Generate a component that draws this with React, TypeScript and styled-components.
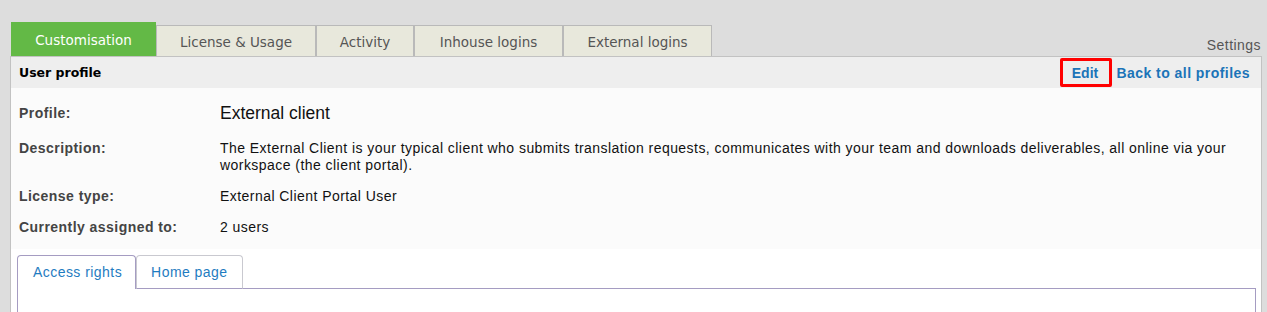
import styled, { createGlobalStyle } from 'styled-components';

const tabs = [
    { label: 'Customisation', width: 145 },
    { label: 'License & Usage', width: 160 },
    { label: 'Activity', width: 98 },
    { label: 'Inhouse logins', width: 149 },
    { label: 'External logins', width: 149 },
];

const rows = [
    { label: 'Profile:', value: 'External client', large: true },
    {
        label: 'Description:',
        value:
            'The External Client is your typical client who submits translation requests, communicates with your team and downloads deliverables, all online via your workspace (the client portal).',
    },
    { label: 'License type:', value: 'External Client Portal User' },
    { label: 'Currently assigned to:', value: '2 users' },
];

export default function App() {
    return (
        <>
            <GlobalStyle />
            <StyledPage>
                <StyledTabBar>
                    {tabs.map((t, i) => (
                        <StyledTab key={t.label} $active={i === 0} $width={t.width}>
                            {t.label}
                        </StyledTab>
                    ))}
                    <StyledSettings>Settings</StyledSettings>
                </StyledTabBar>
                <StyledPanel>
                    <StyledHeader>
                        <StyledTitle>User profile</StyledTitle>
                        <StyledActions>
                            <StyledEdit>Edit</StyledEdit>
                            <StyledLink>Back to all profiles</StyledLink>
                        </StyledActions>
                    </StyledHeader>
                    <StyledInfo>
                        {rows.map((r) => (
                            <StyledRow key={r.label} $large={r.large}>
                                <StyledLabel>{r.label}</StyledLabel>
                                <StyledValue $large={r.large}>{r.value}</StyledValue>
                            </StyledRow>
                        ))}
                    </StyledInfo>
                    <StyledSub>
                        <StyledSubTabs>
                            <StyledSubTab $active>Access rights</StyledSubTab>
                            <StyledSubTab>Home page</StyledSubTab>
                        </StyledSubTabs>
                        <StyledSubBox />
                    </StyledSub>
                </StyledPanel>
            </StyledPage>
        </>
    );
}

const GlobalStyle = createGlobalStyle`
    html, body {
        margin: 0;
        background: #dddddd;
        font-family: "Liberation Sans", Arial, sans-serif;
        letter-spacing: 0.45px;
        overflow: hidden;
    }
`;

const StyledPage = styled.div`
    padding: 22px 5px 0 10px;
    height: 312px;
    box-sizing: border-box;
    display: flex;
    flex-direction: column;
`;

const StyledTabBar = styled.div`
    display: flex;
    align-items: flex-end;
    height: 34px;
    padding-left: 1px;
`;

const StyledTab = styled.div<{ $active?: boolean; $width: number }>`
    box-sizing: border-box;
    width: ${(p) => p.$width}px;
    height: ${(p) => (p.$active ? '34px' : '31px')};
    padding-top: ${(p) => (p.$active ? '0' : '2px')};
    display: flex;
    align-items: center;
    justify-content: center;
    white-space: nowrap;
    font-family: "DejaVu Sans", Verdana, sans-serif;
    font-size: 13.5px;
    letter-spacing: 0;
    color: ${(p) => (p.$active ? '#ffffff' : '#555555')};
    background: ${(p) => (p.$active ? '#63b946' : '#e8e8dc')};
    border: 1px solid ${(p) => (p.$active ? '#63b946' : '#b9b9b9')};
    border-bottom: none;
`;

const StyledSettings = styled.span`
    margin-left: auto;
    margin-right: 1px;
    margin-bottom: 3px;
    font-size: 14px;
    color: #555555;
`;

const StyledPanel = styled.div`
    flex: 1;
    border: 1px solid #c2c2c2;
    border-bottom: none;
    background: #ffffff;
    display: flex;
    flex-direction: column;
`;

const StyledHeader = styled.div`
    height: 31px;
    background: #eeeeee;
    display: flex;
    align-items: center;
    padding: 0 11px 0 8px;
`;

const StyledTitle = styled.span`
    font-family: "DejaVu Sans", Verdana, sans-serif;
    font-weight: bold;
    font-size: 12.5px;
    letter-spacing: 0;
    color: #000000;
`;

const StyledActions = styled.div`
    margin-left: auto;
    display: flex;
    align-items: center;
    gap: 5px;
`;

const StyledEdit = styled.span`
    box-sizing: border-box;
    width: 52px;
    height: 29px;
    padding-right: 1px;
    display: flex;
    align-items: center;
    justify-content: center;
    border: 3px solid #ff0000;
    border-radius: 2px;
    color: #1b74b8;
    font-weight: bold;
    font-size: 14px;
    letter-spacing: 0;
`;

const StyledLink = styled.span`
    color: #1b74b8;
    font-weight: bold;
    font-size: 14px;
`;

const StyledInfo = styled.div`
    background: #fbfbfb;
    padding: 14px 20px 13px 8px;
    display: flex;
    flex-direction: column;
    gap: 14px;
`;

const StyledRow = styled.div<{ $large?: boolean }>`
    display: grid;
    grid-template-columns: 201px 1fr;
    align-items: start;
    font-size: 14px;
    line-height: ${(p) => (p.$large ? '23px' : '17px')};
    margin-bottom: ${(p) => (p.$large ? '1px' : '0')};
`;

const StyledLabel = styled.span`
    font-weight: bold;
    color: #444444;
`;

const StyledValue = styled.span<{ $large?: boolean }>`
    color: #111111;
    font-size: ${(p) => (p.$large ? '17.5px' : '14px')};
    letter-spacing: ${(p) => (p.$large ? '0' : '0.45px')};
`;

const StyledSub = styled.div`
    flex: 1;
    padding: 6px 5px 0 6px;
    display: flex;
    flex-direction: column;
`;

const StyledSubTabs = styled.div`
    display: flex;
    align-items: flex-end;
    height: 34px;
    position: relative;
    z-index: 1;
    margin-bottom: -1px;
`;

const StyledSubTab = styled.div<{ $active?: boolean }>`
    box-sizing: border-box;
    height: 34px;
    padding: ${(p) => (p.$active ? '0 13px 1px 15px' : '0 14px 0 14px')};
    display: flex;
    align-items: center;
    font-size: 14px;
    letter-spacing: 0.45px;
    color: #1f7cc1;
    background: #ffffff;
    border: 1px solid ${(p) => (p.$active ? '#a59cc2' : '#c9c9d0')};
    border-bottom: ${(p) => (p.$active ? 'none' : '1px solid #a59cc2')};
    border-radius: 4px 4px 0 0;
`;

const StyledSubBox = styled.div`
    flex: 1;
    border: 1px solid #a59cc2;
    border-bottom: none;
`;
